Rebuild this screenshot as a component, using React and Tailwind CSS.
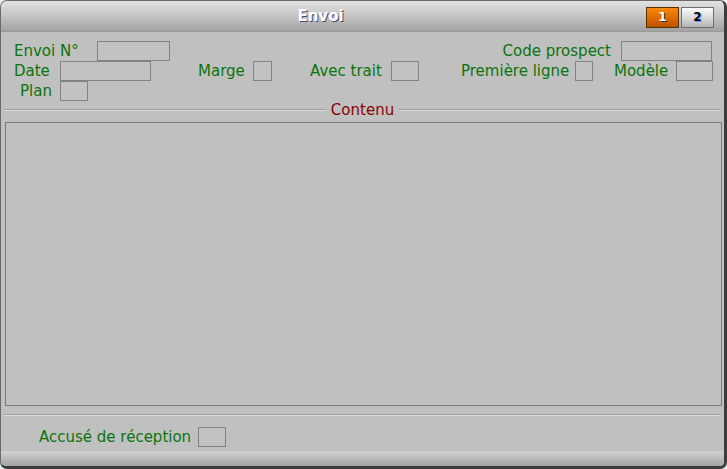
import React from "react";

const font = { fontFamily: '"DejaVu Sans", Verdana, sans-serif' };

function Label({ children, className = "" }) {
  return (
    <span className={`shrink-0 text-[15px] leading-[20px] text-[#0b740b] whitespace-nowrap ${className}`}>
      {children}
    </span>
  );
}

function Field({ w }) {
  return <div className={`shrink-0 h-[20px] border border-[#828282] bg-[#c2c2c2] ${w}`} />;
}

export default function App() {
  return (
    <div className="w-[727px] h-[469px] bg-[#e8f4f4]" style={font}>
      <div className="w-[727px] h-[469px] flex flex-col rounded-[7px] overflow-hidden border-l border-t border-[#6a6a6a] border-r-[3px] border-b-[3px] border-r-[#3c3c3c] border-b-[#3c3c3c] bg-[#c0c0c0]">
        {/* Title bar */}
        <div className="h-[31px] shrink-0 flex items-center relative bg-gradient-to-b from-[#e2e2e2] via-[#c4c4c4] to-[#a2a2a2] border-b border-[#9a9a9a]">
          <div className="flex-1 text-center text-[15px] font-bold text-white [text-shadow:1px_1px_0_#4a4a6a] pr-[6px] pt-[1px]">
            Envoi
          </div>
          <div className="flex gap-[2px] mr-[10px] mt-[2px]">
            <div className="w-[33px] h-[21px] flex items-center justify-center border border-[#5a3000] bg-gradient-to-b from-[#f58a10] via-[#e06c00] to-[#b85400] text-white text-[12px] font-bold [text-shadow:1px_1px_0_#303030]">
              1
            </div>
            <div className="w-[33px] h-[21px] flex items-center justify-center border border-[#707070] bg-gradient-to-b from-[#fafafa] via-[#dcdcdc] to-[#b4b4b4] text-black text-[12px] font-bold [text-shadow:1px_1px_0_#6aa0ff]">
              2
            </div>
          </div>
        </div>

        {/* Form top */}
        <div className="flex flex-col pt-[8px] pl-[13px] pr-[12px]">
          <div className="flex items-center h-[21px]">
            <Label className="w-[83px]">Envoi N°</Label>
            <Field w="w-[73px]" />
            <div className="flex-1" />
            <Label className="mr-[10px]">Code prospect</Label>
            <Field w="w-[91px]" />
          </div>
          <div className="flex items-center h-[20px]">
            <Label className="w-[46px]">Date</Label>
            <Field w="w-[91px]" />
            <Label className="ml-[47px] w-[55px]">Marge</Label>
            <Field w="w-[19px]" />
            <Label className="ml-[38px] w-[81px]">Avec trait</Label>
            <Field w="w-[28px]" />
            <Label className="ml-[42px] w-[114px]">Première ligne</Label>
            <Field w="w-[18px]" />
            <Label className="ml-[21px] w-[62px]">Modèle</Label>
            <Field w="w-[37px]" />
          </div>
          <div className="flex items-center h-[20px]">
            <Label className="w-[46px] pl-[6px]">Plan</Label>
            <Field w="w-[28px]" />
          </div>
        </div>

        {/* Contenu separator */}
        <div className="flex items-center px-[3px] h-[18px]">
          <div className="flex-1 h-[2px] border-t border-[#9c9c9c] bg-[#dcdcdc]" />
          <span className="px-[5px] text-[15px] leading-[18px] text-[#8c0000]">Contenu</span>
          <div className="flex-1 h-[2px] border-t border-[#9c9c9c] bg-[#dcdcdc]" />
        </div>

        {/* Content box */}
        <div className="mt-[3px] ml-[4px] mr-[2px] h-[284px] border border-[#7c7c7c] bg-[#c0c0c0]" />

        {/* Bottom separator */}
        <div className="mt-[8px] mx-[3px] h-[2px] border-t border-[#9c9c9c] bg-[#dcdcdc]" />

        {/* Accusé */}
        <div className="flex items-center h-[20px] mt-[11px] pl-[38px]">
          <Label className="w-[159px]">Accusé de réception</Label>
          <Field w="w-[28px]" />
        </div>

        <div className="flex-1" />
        {/* Bottom bar */}
        <div className="h-[15px] shrink-0 bg-gradient-to-b from-[#d2d2d2] to-[#a4a4a4]" />
      </div>
    </div>
  );
}
